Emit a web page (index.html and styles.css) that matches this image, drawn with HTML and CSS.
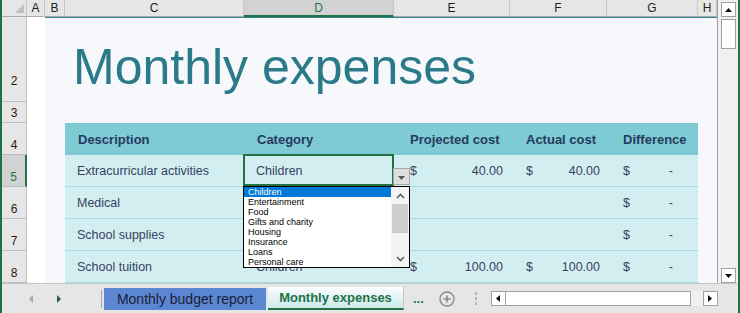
FILE: index.html
```html
<!DOCTYPE html>
<html lang="en">
<head>
    <meta charset="UTF-8">
    <meta name="viewport" content="width=device-width, initial-scale=1.0">
    <title>Monthly expenses</title>
    <link rel="stylesheet" href="styles.css">
</head>
<body>
    <div class="window">
        <div class="workspace">
            <div class="sheet">
                <!-- column headers -->
                <div class="corner">
                    <svg width="9" height="9" viewBox="0 0 9 9"><polygon points="9,0 9,9 0,9" fill="#bdbdbd"/></svg>
                </div>
                <div class="ch">A</div>
                <div class="ch">B</div>
                <div class="ch">C</div>
                <div class="ch active">D</div>
                <div class="ch">E</div>
                <div class="ch">F</div>
                <div class="ch">G</div>
                <div class="ch">H</div>

                <!-- row headers -->
                <div class="rh r1"></div>
                <div class="rh r2">2</div>
                <div class="rh">3</div>
                <div class="rh">4</div>
                <div class="rh active">5</div>
                <div class="rh">6</div>
                <div class="rh">7</div>
                <div class="rh">8</div>

                <!-- cell area -->
                <div class="col-a"></div>
                <div class="canvas"></div>

                <h1 class="title">Monthly expenses</h1>

                <div class="table">
                    <div class="th">Description</div>
                    <div class="th">Category</div>
                    <div class="th num">Projected cost</div>
                    <div class="th num">Actual cost</div>
                    <div class="th num">Difference</div>

                    <div class="td">Extracurricular activities</div>
                    <div class="td sel">
                        <span>Children</span>
                        <div class="dd-btn">
                            <svg width="7" height="4" viewBox="0 0 7 4"><polygon points="0,0 7,0 3.5,4" fill="#555"/></svg>
                        </div>
                        <div class="dd-list">
                            <ul class="dd-items">
                                <li class="on">Children</li>
                                <li>Entertainment</li>
                                <li>Food</li>
                                <li>Gifts and charity</li>
                                <li>Housing</li>
                                <li>Insurance</li>
                                <li>Loans</li>
                                <li>Personal care</li>
                            </ul>
                            <div class="dd-scroll">
                                <div class="dd-arrow">
                                    <svg width="9" height="6" viewBox="0 0 9 6"><polyline points="1,5 4.5,1.5 8,5" fill="none" stroke="#606060" stroke-width="1.6"/></svg>
                                </div>
                                <div class="dd-thumb"></div>
                                <div class="dd-arrow down">
                                    <svg width="9" height="6" viewBox="0 0 9 6"><polyline points="1,1 4.5,4.5 8,1" fill="none" stroke="#606060" stroke-width="1.6"/></svg>
                                </div>
                            </div>
                        </div>
                    </div>
                    <div class="td money"><span>$</span><span>40.00</span></div>
                    <div class="td money"><span>$</span><span>40.00</span></div>
                    <div class="td money"><span>$</span><span class="dash">-</span></div>

                    <div class="td">Medical</div>
                    <div class="td"></div>
                    <div class="td"></div>
                    <div class="td"></div>
                    <div class="td money"><span>$</span><span class="dash">-</span></div>

                    <div class="td">School supplies</div>
                    <div class="td"></div>
                    <div class="td"></div>
                    <div class="td"></div>
                    <div class="td money"><span>$</span><span class="dash">-</span></div>

                    <div class="td">School tuition</div>
                    <div class="td">Children</div>
                    <div class="td money"><span>$</span><span>100.00</span></div>
                    <div class="td money"><span>$</span><span>100.00</span></div>
                    <div class="td money"><span>$</span><span class="dash">-</span></div>
                </div>
            </div>

            <div class="vscroll">
                <div class="sb-btn">
                    <svg width="7" height="4" viewBox="0 0 7 4"><polygon points="0,4 7,4 3.5,0" fill="#111"/></svg>
                </div>
                <div class="vs-thumb"></div>
                <div class="sb-btn bottom">
                    <svg width="7" height="4" viewBox="0 0 7 4"><polygon points="0,0 7,0 3.5,4" fill="#111"/></svg>
                </div>
            </div>
        </div>

        <div class="tabbar">
            <div class="tab-nav">
                <svg width="4" height="8" viewBox="0 0 4 8"><polygon points="4,0 4,8 0,4" fill="#a8a8a8"/></svg>
                <svg width="4" height="8" viewBox="0 0 4 8"><polygon points="0,0 4,4 0,8" fill="#215e3c"/></svg>
            </div>
            <div class="tab-sep"></div>
            <div class="tab budget">Monthly budget report</div>
            <div class="tab current">Monthly expenses</div>
            <div class="more">...</div>
            <svg class="add" width="16" height="16" viewBox="0 0 16 16">
                <circle cx="8" cy="8" r="7" fill="none" stroke="#8a8a8a" stroke-width="1.4"/>
                <path d="M8 4.5V11.5M4.5 8H11.5" stroke="#8a8a8a" stroke-width="1.6"/>
            </svg>
            <svg class="grip" width="2" height="13" viewBox="0 0 2 13">
                <rect x="0" y="0" width="2" height="3" fill="#b4b4b4"/>
                <rect x="0" y="5" width="2" height="3" fill="#b4b4b4"/>
                <rect x="0" y="10" width="2" height="3" fill="#b4b4b4"/>
            </svg>
            <div class="hscroll">
                <div class="sb-btn">
                    <svg width="4" height="7" viewBox="0 0 4 7"><polygon points="4,0 4,7 0,3.5" fill="#111"/></svg>
                </div>
                <div class="hs-thumb"></div>
                <div class="hs-track"></div>
                <div class="sb-btn">
                    <svg width="4" height="7" viewBox="0 0 4 7"><polygon points="0,0 4,3.5 0,7" fill="#111"/></svg>
                </div>
            </div>
        </div>
    </div>
</body>
</html>
```

FILE: styles.css
```css
* {
    box-sizing: border-box;
}

body {
    margin: 0;
    font-family: 'Liberation Sans', Arial, sans-serif;
    background: #e6e6e6;
}

.window {
    width: 740px;
    height: 313px;
    border-left: 2px solid #217346;
    border-right: 2px solid #217346;
    display: flex;
    flex-direction: column;
    overflow: hidden;
}

.workspace {
    display: flex;
    height: 283px;
}

/* grid of the sheet */
.sheet {
    display: grid;
    grid-template-columns: 25px 18px 20px 179px 150px 116px 97px 91px 19px;
    grid-template-rows: 17px 1px 84px 21px repeat(5, 32px);
    width: 715px;
    overflow: hidden;
}

.corner {
    background: #e6e6e6;
    border-right: 1px solid #c6c6c6;
    border-bottom: 1px solid #ababab;
    display: flex;
    justify-content: flex-end;
    align-items: flex-end;
    padding: 0 2px 3px 0;
}

.ch {
    background: #e6e6e6;
    border-right: 1px solid #c6c6c6;
    border-bottom: 1px solid #ababab;
    display: flex;
    align-items: center;
    justify-content: center;
    font-size: 12px;
    color: #1e1e1e;
}

.ch.active {
    background: #d2d2d2;
    color: #217346;
    border-bottom: 2px solid #217346;
}

.rh {
    grid-column: 1;
    background: #e6e6e6;
    border-right: 1px solid #c6c6c6;
    border-bottom: 1px solid #bdbdbd;
    display: flex;
    align-items: flex-end;
    justify-content: center;
    padding-bottom: 2px;
    font-size: 12px;
    line-height: 14px;
    color: #1e1e1e;
}

.rh.r1 {
    border-bottom: none;
    padding: 0;
}

.rh.r2 {
    padding-bottom: 13px;
}

.rh.active {
    background: #d2d2d2;
    color: #217346;
    border-right: 2px solid #217346;
}

.col-a {
    grid-column: 2;
    grid-row: 2 / -1;
    background: #fff;
}

.canvas {
    grid-column: 3 / -1;
    grid-row: 2 / -1;
    background: #f6f8fc;
    border-top: 1px solid #2e8795;
}

.title {
    grid-column: 4 / 9;
    grid-row: 3;
    margin: 21px 0 0;
    padding-left: 8px;
    font-size: 50px;
    line-height: 56px;
    font-weight: normal;
    color: #2a7a87;
    white-space: nowrap;
}

.table {
    grid-column: 4 / 9;
    grid-row: 5 / 10;
    display: grid;
    grid-template-columns: 179px 150px 116px 97px 91px;
    grid-auto-rows: 32px;
}

.th {
    background: #7ecad5;
    display: flex;
    align-items: center;
    padding-left: 13px;
    font-size: 13px;
    font-weight: bold;
    color: #263b5e;
    white-space: nowrap;
}

.th.num {
    padding-left: 16px;
}

.td {
    background: #d3eef1;
    border-bottom: 1px solid #a4dbe4;
    display: flex;
    align-items: center;
    padding: 0 12px;
    font-size: 12.5px;
    color: #35435f;
    white-space: nowrap;
}

.td.money {
    justify-content: space-between;
    padding: 0 7px 0 16px;
}

.td .dash {
    margin-right: 18px;
}

/* selected cell with its validation list */
.td.sel {
    position: relative;
}

.td.sel::after {
    content: '';
    position: absolute;
    top: -1px;
    left: -1px;
    right: 0;
    bottom: 0;
    border: 2px solid #217346;
}

.dd-btn {
    position: absolute;
    left: 149px;
    top: 13px;
    width: 17px;
    height: 17px;
    background: #dedede;
    border: 1px solid #a8a8a8;
    display: flex;
    align-items: center;
    justify-content: center;
    padding-top: 2px;
    z-index: 2;
}

.dd-list {
    position: absolute;
    left: -1px;
    top: 31px;
    width: 167px;
    height: 82px;
    background: #fff;
    border: 1px solid #000;
    display: flex;
    z-index: 3;
}

.dd-items {
    flex: 1;
    margin: 0;
    padding: 0;
    list-style: none;
}

.dd-items li {
    height: 10px;
    line-height: 10px;
    padding-left: 4px;
    font-size: 9px;
    color: #000;
}

.dd-items li.on {
    background: #0078d7;
    color: #fff;
}

.dd-scroll {
    width: 18px;
    background: #f4f4f4;
    display: flex;
    flex-direction: column;
    align-items: center;
}

.dd-arrow {
    height: 17px;
    display: flex;
    align-items: center;
    justify-content: center;
}

.dd-arrow.down {
    margin-top: auto;
}

.dd-thumb {
    width: 16px;
    height: 29px;
    background: #cdcdcd;
}

/* scroll bars */
.vscroll {
    width: 21px;
    border-left: 1px solid #a0a0a0;
    background: #f0f0f0;
    display: flex;
    flex-direction: column;
    padding: 2px 2px 0 3px;
}

.sb-btn {
    width: 15px;
    height: 15px;
    background: #fff;
    border: 1px solid #a0a0a0;
    display: flex;
    align-items: center;
    justify-content: center;
    flex-shrink: 0;
}

.sb-btn.bottom {
    margin-top: auto;
}

.vs-thumb {
    height: 30px;
    margin-top: 2px;
    background: #fff;
    border: 1px solid #a0a0a0;
}

/* sheet tabs */
.tabbar {
    height: 30px;
    border-top: 1px solid #c6c6c6;
    background: #e6e6e6;
    display: flex;
    align-items: center;
}

.tab-nav {
    width: 99px;
    display: flex;
    align-items: center;
    gap: 24px;
    padding-left: 27px;
}

.tab-sep {
    width: 1px;
    height: 18px;
    background: #a6a6a6;
}

.tab {
    height: 22px;
    margin-left: 2px;
    display: flex;
    align-items: center;
    justify-content: center;
    font-size: 14px;
    color: #1c1c38;
    flex-shrink: 0;
}

.tab.budget {
    width: 162px;
    background: #5b87d2;
}

.tab.current {
    width: 136px;
    height: 23px;
    background: linear-gradient(#fbfdfd, #cde9ed);
    border-right: 1px solid #c6c6c6;
    border-bottom: 2px solid #217346;
    font-size: 13px;
    font-weight: bold;
    color: #217346;
}

.more {
    margin-left: 9px;
    font-size: 13px;
    font-weight: bold;
    color: #217346;
}

.add {
    margin-left: 15px;
}

.grip {
    margin-left: 20px;
}

.hscroll {
    display: flex;
    height: 15px;
    margin-left: 14px;
}

.hs-thumb {
    width: 185px;
    background: #fff;
    border: 1px solid #a0a0a0;
    border-left: none;
}

.hs-track {
    width: 12px;
    background: #f0f0f0;
}
```
